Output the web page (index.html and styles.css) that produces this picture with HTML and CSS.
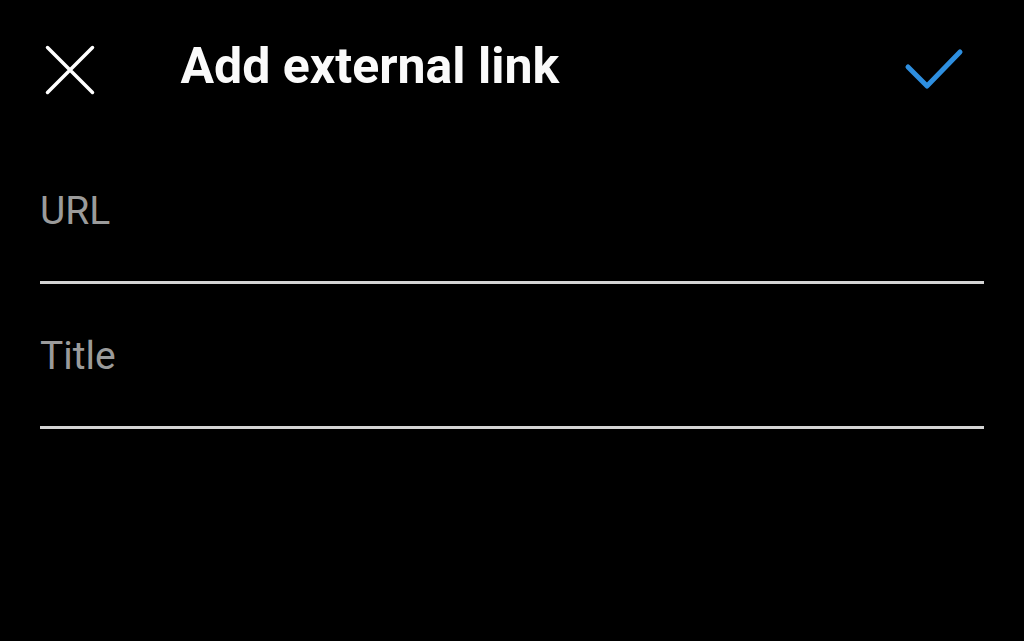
FILE: index.html
```html
<!DOCTYPE html>
<html lang="en">
<head>
<meta charset="utf-8">
<title>Add external link</title>
<link rel="stylesheet" href="styles.css">
</head>
<body>
<div class="screen">
  <header class="header">
    <button class="icon-btn close" aria-label="Close">
      <svg width="52" height="52" viewBox="0 0 52 52"><path d="M3.5 3.5 L48.5 48.5 M48.5 3.5 L3.5 48.5" stroke="#ffffff" stroke-width="3.5" stroke-linecap="round" fill="none"/></svg>
    </button>
    <h1 class="title">Add external link</h1>
    <button class="icon-btn done" aria-label="Done">
      <svg width="68" height="50" viewBox="0 0 68 50"><path d="M8 23 L27 42 L60 8" stroke="#2e8fe0" stroke-width="5" stroke-linecap="round" stroke-linejoin="round" fill="none"/></svg>
    </button>
  </header>
  <form class="form">
    <div class="field"><div class="label">URL</div></div>
    <div class="field"><div class="label">Title</div></div>
  </form>
</div>
</body>
</html>
```

FILE: styles.css
```css
html, body {
  margin: 0;
  padding: 0;
  background: #000;
}
.screen {
  width: 1024px;
  height: 641px;
  background: #000;
  font-family: Roboto, "Noto Sans", sans-serif;
  overflow: hidden;
}
.header {
  height: 139px;
  display: flex;
  align-items: center;
  padding: 0 56px 0 43.5px;
  box-sizing: border-box;
}
.icon-btn {
  background: none;
  border: 0;
  padding: 0;
  margin: 0;
  display: flex;
}
.title {
  margin: 0 0 7px 85px;
  font-size: 50px;
  line-height: 60px;
  font-weight: 700;
  color: #fafafa;
  flex: 1;
}
.done {
  margin-bottom: 1px;
}
.form {
  padding: 0 40px;
  margin: 0;
}
.field {
  padding: 49px 0 47px;
  border-bottom: 3px solid #d4d4d4;
}
.label {
  font-size: 39px;
  line-height: 46px;
  color: #9b9b9b;
}
```
